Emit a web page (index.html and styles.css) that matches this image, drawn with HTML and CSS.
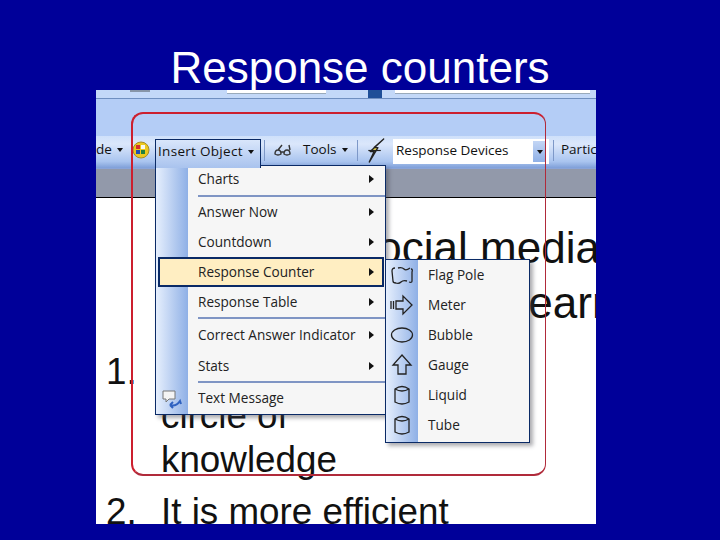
FILE: index.html
```html
<!DOCTYPE html>
<html lang="en">
<head>
<meta charset="utf-8">
<title>Response counters</title>
<link rel="stylesheet" href="styles.css">
</head>
<body>
<main class="slide">
  <h1 class="title">Response counters</h1>
  <section class="shot">
    <div class="bar-top">
      <span class="dash"></span>
      <span class="field field-a"></span>
      <span class="mini-arrow"></span>
      <span class="field field-b"></span>
    </div>
    <div class="bar-blank"></div>
    <div class="toolbar">
      <span class="tb-slot slot-de"><span class="tb-text">de</span><span class="caret"></span></span>
      <svg class="ic-face" viewBox="0 0 18 18"><circle cx="9" cy="9" r="8" fill="#ecc820" stroke="#a58c25"/><rect x="4" y="4" width="4" height="4" fill="#d03030"/><rect x="9" y="4" width="4" height="4" fill="#f8f8f0"/><rect x="4" y="9" width="4" height="4" fill="#2050b0"/><rect x="9" y="9" width="4" height="4" fill="#208040"/></svg>
      <span class="tb-open"><span class="tb-text tb-insert">Insert Object</span><span class="caret"></span></span>
      <span class="tb-sep"></span>
      <svg class="ic-glasses" viewBox="0 0 18 12"><path d="M1 10 Q1 6 4 6 Q7 6 7 10 Q4 12 1 10Z M10 10 Q10 6 13 6 Q16 6 16 10 Q13 12 10 10Z M7 8 H10 M4 6 L8 1 M16 6 L15 1" fill="none" stroke="#333" stroke-width="1.4"/></svg>
      <span class="tb-slot slot-tools"><span class="tb-text">Tools</span><span class="caret"></span></span>
      <span class="tb-sep tb-sep2"></span>
      <svg class="ic-bolt" viewBox="0 0 18 26"><path d="M17 1 L7 10 L11 10 L2 25 L7 14 L3 14 Z" fill="#e8d850" stroke="#222" stroke-width="1.400" stroke-linejoin="round"/><path d="M1 13 H14" stroke="#222" stroke-width="1.200"/></svg>
      <span class="combo"><span class="combo-text">Response Devices</span><span class="combo-btn"><span class="caret"></span></span></span>
      <span class="tb-sep tb-sep3"></span>
      <span class="tb-text">Partic</span>
    </div>
    <div class="bar-grey"></div>
    <div class="doc">
      <p class="doc-line doc-big doc-l1">Social media</p>
      <p class="doc-line doc-big doc-l2">for learn</p>
      <p class="doc-line doc-l3"><span class="num">1.</span></p>
      <p class="doc-line doc-l4">circle of</p>
      <p class="doc-line doc-l5">knowledge</p>
      <p class="doc-line doc-l6"><span class="num">2.</span>It is more efficient</p>
    </div>

    <div class="frame"></div>

    <div class="menu menu-main">
      <div class="item row-charts"><span class="gut"></span><span class="lbl">Charts</span><span class="arr"></span></div>
      <div class="rule"></div>
      <div class="item"><span class="gut"></span><span class="lbl">Answer Now</span><span class="arr"></span></div>
      <div class="item"><span class="gut"></span><span class="lbl">Countdown</span><span class="arr"></span></div>
      <div class="item hot"><span class="gut"></span><span class="lbl">Response Counter</span><span class="arr"></span></div>
      <div class="item"><span class="gut"></span><span class="lbl">Response Table</span><span class="arr"></span></div>
      <div class="rule"></div>
      <div class="item row-correct"><span class="gut"></span><span class="lbl">Correct Answer Indicator</span><span class="arr"></span></div>
      <div class="item"><span class="gut"></span><span class="lbl">Stats</span><span class="arr"></span></div>
      <div class="rule"></div>
      <div class="item row-text"><span class="gut"><svg class="ic" viewBox="0 0 22 22"><path d="M2 3 H14 V11 H8 L5 14 V11 H2 Z" fill="#f4f4f4" stroke="#777"/><path d="M9 17 Q15 19 19 13 L20 16 M9 17 L12 14 M9 17 L12 20" fill="none" stroke="#2f62c0" stroke-width="2"/></svg></span><span class="lbl">Text Message</span></div>
    </div>

    <div class="menu menu-sub">
      <div class="item"><span class="gut"><svg class="ic" viewBox="0 0 24 22"><path d="M5 4 Q2 4 2 7 L3 17 Q3 19 6 19 M8 4 Q12 3 14 5 T20 4 M21 5 Q23 5 22 8 V17 Q22 19 19 18 M17 17 Q13 16 11 18 T6 19" fill="none" stroke="#222" stroke-width="1.300"/></svg></span><span class="lbl">Flag Pole</span></div>
      <div class="item"><span class="gut"><svg class="ic" viewBox="0 0 24 22"><path d="M1 7 V15 M3.500 7 V15 M6 7 H13 V2 L22 11 L13 20 V15 H6 Z" fill="none" stroke="#222" stroke-width="1.300"/></svg></span><span class="lbl">Meter</span></div>
      <div class="item"><span class="gut"><svg class="ic" viewBox="0 0 24 22"><ellipse cx="12" cy="11" rx="10.500" ry="7" fill="none" stroke="#222" stroke-width="1.300"/></svg></span><span class="lbl">Bubble</span></div>
      <div class="item"><span class="gut"><svg class="ic" viewBox="0 0 24 22"><path d="M12 1 L21 11 H16 V20 H8 V11 H3 Z" fill="none" stroke="#222" stroke-width="1.300"/></svg></span><span class="lbl">Gauge</span></div>
      <div class="item"><span class="gut"><svg class="ic" viewBox="0 0 24 22"><path d="M5 5 Q12 0 19 5 V18 Q12 22 5 18 Z" fill="none" stroke="#222" stroke-width="1.300"/><path d="M5 5 Q12 9 19 5" fill="none" stroke="#222" stroke-width="1.300"/></svg></span><span class="lbl">Liquid</span></div>
      <div class="item"><span class="gut"><svg class="ic" viewBox="0 0 24 22"><path d="M5 5 Q12 0 19 5 V18 Q12 22 5 18 Z" fill="none" stroke="#222" stroke-width="1.300"/><path d="M5 5 Q12 9 19 5" fill="none" stroke="#222" stroke-width="1.300"/></svg></span><span class="lbl">Tube</span></div>
    </div>
  </section>
</main>
</body>
</html>
```
FILE: styles.css
```css
* { box-sizing: border-box; }
html, body { margin: 0; padding: 0; }
body { width: 720px; height: 540px; overflow: hidden; background: #000099; font-family: "Liberation Sans", Arial, sans-serif; }
.slide { width: 720px; height: 540px; display: flex; flex-direction: column; }
.title { margin: 0; height: 90px; padding-top: 43px; font-size: 44px; line-height: 50px; font-weight: 400; color: #fff; text-align: center; white-space: nowrap; position: relative; z-index: 5; }

.shot { position: relative; margin-left: 96px; width: 500px; height: 434px; overflow: hidden; background: #fff; display: flex; flex-direction: column; }
.bar-top { height: 9px; flex: none; background: #c3d8f8; border-bottom: 1px solid #6f8fc0; display: flex; align-items: flex-start; }
.dash { width: 20px; height: 2px; margin-left: 34px; background: #8795a8; flex: none; }
.field { display: block; height: 4px; background: #fff; border-bottom: 1px solid #9ab; flex: none; }
.field-a { width: 99px; margin-left: 77px; }
.mini-arrow { width: 14px; height: 8px; margin-left: 42px; background: #1f4f98; flex: none; }
.field-b { width: 195px; margin-left: 13px; }
.bar-blank { height: 37px; flex: none; background: #b4cdf6; }
.toolbar { height: 32px; padding-bottom: 4px; flex: none; background: linear-gradient(#cfe0fa 0%, #dbe7fb 25%, #a9c4ef 80%, #7f9fd8 100%); display: flex; align-items: center; font-family: "Open Sans", sans-serif; font-size: 13.500px; color: #111; white-space: nowrap; }
.tb-text { line-height: 16px; padding-bottom: 2px; }
.tb-insert { letter-spacing: .3px; }
.tb-slot { display: flex; align-items: center; flex: none; }
.slot-de { width: 36px; }
.slot-tools { width: 54px; margin-left: 11px; }
.caret { display: inline-block; width: 0; height: 0; border-left: 3.500px solid transparent; border-right: 3.500px solid transparent; border-top: 4px solid #111; margin-left: 5px; flex: none; }
.ic-face { width: 18px; height: 18px; flex: none; }
.tb-open { height: 29px; align-self: flex-end; margin-bottom: -4px; padding: 0 0 5px 2px; display: flex; align-items: center; width: 106px; margin-left: 5px; background: linear-gradient(#d9e6fb, #a9c3ee); border: 1px solid #0a2a66; border-bottom: 0; position: relative; z-index: 3; flex: none; }
.tb-sep { width: 1px; height: 21px; background: #7d98c8; margin-left: 3px; flex: none; }
.ic-glasses { width: 18px; height: 12px; margin-left: 9px; flex: none; }
.tb-sep2 { margin-left: 0; }
.ic-bolt { width: 18px; height: 25px; margin-left: 9px; flex: none; }
.combo { width: 156px; height: 25px; margin-left: 8px; margin-top: 3px; background: #fff; display: flex; align-items: center; justify-content: space-between; flex: none; padding-right: 3px; }
.combo-text { margin-left: 3px; padding-bottom: 3px; }
.combo-btn { width: 13px; height: 21px; background: linear-gradient(#c3d6f5, #8fb0e6); display: flex; align-items: center; justify-content: center; flex: none; }
.combo-btn .caret { margin: 0; }
.tb-sep3 { margin-left: 4px; margin-right: 7px; }
.bar-grey { height: 30px; flex: none; background: #9299aa; border-top: 1px solid #8aa4d8; border-bottom: 1px solid #000; }

.doc { flex: 1; background: #fff; padding-left: 65px; padding-top: 28px; color: #111; font-size: 36.800px; line-height: 44px; }
.doc-line { margin: 0; white-space: nowrap; position: relative; }
.doc-big { font-size: 44px; }
.num { position: absolute; left: -55px; top: 0; }
.doc-l1 { padding-left: 187px; }
.doc-l2 { padding-left: 294px; margin-top: 11px; }
.doc-l3 { height: 44px; margin-top: 25px; }
.doc-l6 { margin-top: 8px; }

.frame { position: absolute; left: 35px; top: 22px; width: 415px; height: 364px; border: 2px solid #cc1f2e; border-right: 1px solid #b02a3a; border-bottom-color: #b02a3a; border-radius: 12px; z-index: 1; }

.menu { position: absolute; background: linear-gradient(90deg, #e6effd, #8fb0e6) 0 0 / 32px 100% no-repeat, #f6f6f6; border: 1px solid #0a2a66; box-shadow: 3px 3px 4px rgba(70,70,80,.45); z-index: 2; font-family: "Open Sans", sans-serif; font-size: 13.600px; color: #222; display: flex; flex-direction: column; }
.menu-main { left: 59px; top: 75px; width: 231px; height: 250px; }
.menu-sub { left: 289px; top: 169px; width: 145px; height: 184px; padding-bottom: 2px; }
.menu-sub .item { flex: 1; }
.item { display: flex; align-items: center; white-space: nowrap; height: 30px; }
.row-charts { height: 29px; padding-bottom: 3px; }
.row-correct { height: 32px; }
.row-text { height: 31px; }
.gut { width: 32px; align-self: stretch; flex: none; display: flex; align-items: center; justify-content: center; }
.lbl { margin-left: 10px; flex: 1; padding-bottom: 2px; }
.arr { width: 0; height: 0; border-top: 4.500px solid transparent; border-bottom: 4.500px solid transparent; border-left: 5px solid #111; margin-right: 11px; flex: none; }
.rule { height: 2px; margin-left: 42px; background: #7f95c4; flex: none; }
.hot { background: #ffeec2; border: 2px solid #0a2a66; margin: 0 1px 0 2px; position: relative; z-index: 1; }
.hot .gut { width: 28px; }
.hot .arr { margin-right: 8px; }
.ic { width: 24px; height: 22px; display: block; flex: none; }
```
